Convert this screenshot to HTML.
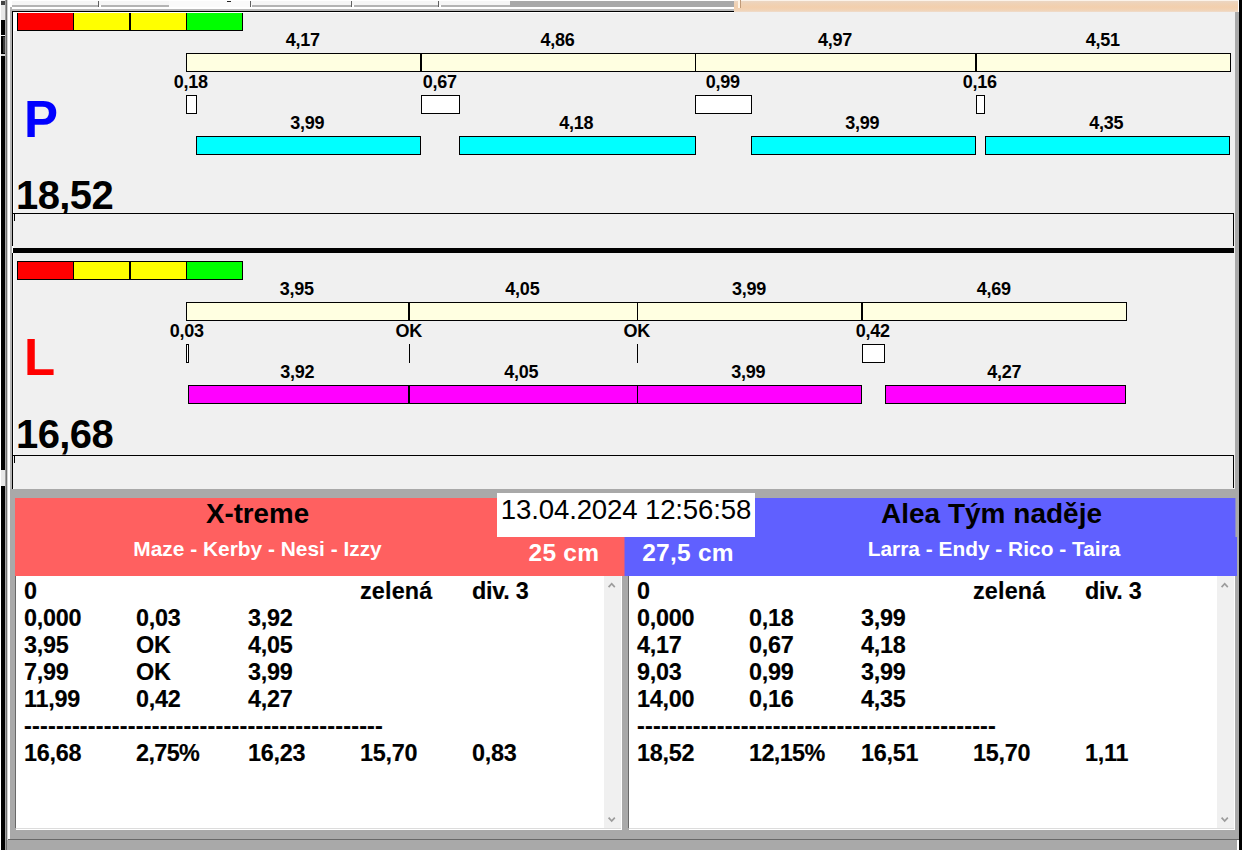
<!DOCTYPE html>
<html lang="cs"><head><meta charset="utf-8"><title>Flyball</title>
<style>
html,body{margin:0;padding:0;}
body{width:1242px;height:850px;overflow:hidden;background:#f0f0f0;position:relative;font-family:"Liberation Sans",sans-serif;color:#000;}
div,span{position:absolute;box-sizing:border-box;}
.b{border:1px solid #000;}
.lbl{font-weight:bold;font-size:18px;letter-spacing:-0.25px;line-height:20px;height:20px;width:80px;text-align:center;white-space:nowrap;}
.big{font-weight:bold;font-size:40px;line-height:40px;white-space:nowrap;letter-spacing:-0.6px;}
.letter{font-weight:bold;font-size:51px;line-height:51px;white-space:nowrap;}
.txt{font-weight:bold;font-size:23.4px;letter-spacing:-0.25px;-webkit-text-stroke:0.15px #000;line-height:27px;white-space:nowrap;height:27px;}
.hw{color:#fff;font-weight:bold;white-space:nowrap;}
.hb{color:#000;font-weight:bold;white-space:nowrap;text-align:center;}
</style></head><body>

<div style="left:13px;top:12px;width:1px;height:477px;background:#fff;"></div>
<div style="left:14px;top:12px;width:3px;height:19px;background:#fff;"></div>
<div class="b" style="left:17px;top:12px;width:57px;height:19px;background:#ff0000;"></div>
<div class="b" style="left:73px;top:12px;width:57px;height:19px;background:#ffff00;"></div>
<div class="b" style="left:130px;top:12px;width:57px;height:19px;background:#ffff00;"></div>
<div class="b" style="left:186px;top:12px;width:57px;height:19px;background:#00ff00;"></div>
<div style="left:129px;top:12px;width:2px;height:19px;background:#000;"></div>
<div class="b" style="left:186px;top:53px;width:1045px;height:19px;background:#ffffe1;"></div>
<div style="left:420px;top:53px;width:2px;height:19px;background:#000;"></div>
<div style="left:695px;top:53px;width:1px;height:19px;background:#000;"></div>
<div style="left:975px;top:53px;width:2px;height:19px;background:#000;"></div>
<div class="lbl" style="left:262.7px;top:30.0px;">4,17</div>
<div class="lbl" style="left:517.5px;top:30.0px;">4,86</div>
<div class="lbl" style="left:795.0px;top:30.0px;">4,97</div>
<div class="lbl" style="left:1062.7px;top:30.0px;">4,51</div>
<div class="b" style="left:186px;top:95px;width:11px;height:19px;background:#fff;"></div>
<div class="lbl" style="left:150.7px;top:72.0px;">0,18</div>
<div class="b" style="left:421px;top:95px;width:39px;height:19px;background:#fff;"></div>
<div class="lbl" style="left:399.7px;top:72.0px;">0,67</div>
<div class="b" style="left:695px;top:95px;width:57px;height:19px;background:#fff;"></div>
<div class="lbl" style="left:682.7px;top:72.0px;">0,99</div>
<div class="b" style="left:976px;top:95px;width:9px;height:19px;background:#fff;"></div>
<div class="lbl" style="left:939.7px;top:72.0px;">0,16</div>
<div class="b" style="left:196px;top:136px;width:225px;height:19px;background:#00ffff;"></div>
<div class="b" style="left:459px;top:136px;width:237px;height:19px;background:#00ffff;"></div>
<div class="b" style="left:751px;top:136px;width:225px;height:19px;background:#00ffff;"></div>
<div class="b" style="left:985px;top:136px;width:245px;height:19px;background:#00ffff;"></div>
<div class="lbl" style="left:267.2px;top:113.0px;">3,99</div>
<div class="lbl" style="left:536.2px;top:113.0px;">4,18</div>
<div class="lbl" style="left:822.2px;top:113.0px;">3,99</div>
<div class="lbl" style="left:1066.2px;top:113.0px;">4,35</div>
<div class="letter" style="left:24px;top:94px;color:#0000ff;">P</div>
<div class="big" style="left:16px;top:175px;">18,52</div>
<div style="left:12px;top:213px;width:1222px;height:33px;background:#f0f0f0;border-top:1px solid #000;border-right:1px solid #000;"></div>
<div style="left:14px;top:214px;width:1px;height:7px;background:#000;"></div>
<div style="left:13px;top:248px;width:1221px;height:5px;background:#000;"></div>
<div class="b" style="left:17px;top:261px;width:57px;height:19px;background:#ff0000;"></div>
<div class="b" style="left:73px;top:261px;width:57px;height:19px;background:#ffff00;"></div>
<div class="b" style="left:130px;top:261px;width:57px;height:19px;background:#ffff00;"></div>
<div class="b" style="left:186px;top:261px;width:57px;height:19px;background:#00ff00;"></div>
<div style="left:129px;top:261px;width:2px;height:19px;background:#000;"></div>
<div class="b" style="left:186px;top:302px;width:941px;height:19px;background:#ffffe1;"></div>
<div style="left:408px;top:302px;width:2px;height:19px;background:#000;"></div>
<div style="left:637px;top:302px;width:1px;height:19px;background:#000;"></div>
<div style="left:861px;top:302px;width:2px;height:19px;background:#000;"></div>
<div class="lbl" style="left:256.7px;top:279.0px;">3,95</div>
<div class="lbl" style="left:482.4px;top:279.0px;">4,05</div>
<div class="lbl" style="left:709.0px;top:279.0px;">3,99</div>
<div class="lbl" style="left:953.7px;top:279.0px;">4,69</div>
<div class="b" style="left:186px;top:344px;width:3px;height:19px;background:#fff;"></div>
<div class="lbl" style="left:146.7px;top:321.0px;">0,03</div>
<div style="left:409px;top:344px;width:1px;height:19px;background:#000;"></div>
<div class="lbl" style="left:368.7px;top:321.0px;">OK</div>
<div style="left:637px;top:344px;width:1px;height:19px;background:#000;"></div>
<div class="lbl" style="left:596.7px;top:321.0px;">OK</div>
<div class="b" style="left:862px;top:344px;width:23px;height:19px;background:#fff;"></div>
<div class="lbl" style="left:832.7px;top:321.0px;">0,42</div>
<div class="b" style="left:188px;top:385px;width:221px;height:19px;background:#ff00ff;"></div>
<div class="b" style="left:409px;top:385px;width:229px;height:19px;background:#ff00ff;"></div>
<div class="b" style="left:637px;top:385px;width:225px;height:19px;background:#ff00ff;"></div>
<div class="b" style="left:885px;top:385px;width:241px;height:19px;background:#ff00ff;"></div>
<div class="lbl" style="left:257.2px;top:362.0px;">3,92</div>
<div class="lbl" style="left:481.2px;top:362.0px;">4,05</div>
<div class="lbl" style="left:708.2px;top:362.0px;">3,99</div>
<div class="lbl" style="left:964.2px;top:362.0px;">4,27</div>
<div class="letter" style="left:24px;top:332px;color:#ff0000;">L</div>
<div class="big" style="left:16px;top:414px;">16,68</div>
<div style="left:12px;top:455px;width:1222px;height:33px;background:#f0f0f0;border-top:1px solid #000;border-right:1px solid #000;"></div>
<div style="left:14px;top:456px;width:1px;height:7px;background:#000;"></div>
<div style="left:10px;top:489px;width:1229px;height:361px;background:#a9a9a9;"></div>
<div style="left:15px;top:498px;width:610px;height:78px;background:#ff6060;"></div>
<div style="left:624px;top:498px;width:1px;height:78px;background:#b060b0;"></div>
<div style="left:625px;top:498px;width:611px;height:78px;background:#6060ff;"></div>
<div style="left:497px;top:493px;width:258px;height:44px;background:#fff;"></div>
<div style="left:497px;top:493px;width:258px;height:44px;line-height:33px;font-size:27.6px;letter-spacing:-0.15px;text-align:center;white-space:nowrap;">13.04.2024 12:56:58</div>
<div class="hb" style="left:16px;top:498px;width:483px;font-size:27.7px;line-height:32px;">X-treme</div>
<div class="hw" style="left:16px;top:536.5px;width:483px;text-align:center;font-size:20.9px;line-height:24px;">Maze - Kerby - Nesi - Izzy</div>
<div class="hb" style="left:755px;top:498px;width:473px;font-size:28px;line-height:32px;">Alea Tým naděje</div>
<div class="hw" style="left:755px;top:536.5px;width:478px;text-align:center;font-size:20.9px;line-height:24px;">Larra - Endy - Rico - Taira</div>
<div class="hw" style="left:528.5px;top:538.5px;font-size:24.5px;letter-spacing:0.25px;line-height:28px;">25 cm</div>
<div class="hw" style="left:642.2px;top:538.5px;font-size:24.5px;letter-spacing:0.25px;line-height:28px;">27,5 cm</div>
<div style="left:16px;top:576px;width:605px;height:254px;background:#fff;"></div>
<div style="left:16px;top:828px;width:605px;height:1px;background:#dcdcdc;"></div>
<div style="left:604px;top:576px;width:17px;height:252px;background:#f0f0f0;"></div>
<svg style="position:absolute;left:604px;top:578px" width="17" height="14" viewBox="0 0 17 14"><path d="M4.6 9.1 L7.7 5.7 L10.8 9.1" fill="none" stroke="#9c9c9c" stroke-width="1.7"/></svg>
<svg style="position:absolute;left:604px;top:812px" width="17" height="14" viewBox="0 0 17 14"><path d="M4.6 5.6 L7.7 9 L10.8 5.6" fill="none" stroke="#9c9c9c" stroke-width="1.7"/></svg>
<div class="txt" style="left:24px;top:578px;">0</div>
<div class="txt" style="left:360px;top:578px;letter-spacing:0.15px;">zelená</div>
<div class="txt" style="left:472px;top:578px;">div. 3</div>
<div class="txt" style="left:24px;top:605px;">0,000</div>
<div class="txt" style="left:136px;top:605px;">0,03</div>
<div class="txt" style="left:248px;top:605px;">3,92</div>
<div class="txt" style="left:24px;top:632px;">3,95</div>
<div class="txt" style="left:136px;top:632px;">OK</div>
<div class="txt" style="left:248px;top:632px;">4,05</div>
<div class="txt" style="left:24px;top:659px;">7,99</div>
<div class="txt" style="left:136px;top:659px;">OK</div>
<div class="txt" style="left:248px;top:659px;">3,99</div>
<div class="txt" style="left:24px;top:686px;">11,99</div>
<div class="txt" style="left:136px;top:686px;">0,42</div>
<div class="txt" style="left:248px;top:686px;">4,27</div>
<div class="txt" style="left:24px;top:713px;letter-spacing:0.19px;">---------------------------------------------</div>
<div class="txt" style="left:24px;top:740px;">16,68</div>
<div class="txt" style="left:136px;top:740px;letter-spacing:-0.6px;">2,75%</div>
<div class="txt" style="left:248px;top:740px;">16,23</div>
<div class="txt" style="left:360px;top:740px;">15,70</div>
<div class="txt" style="left:472px;top:740px;">0,83</div>
<div style="left:629px;top:576px;width:605px;height:254px;background:#fff;"></div>
<div style="left:629px;top:828px;width:605px;height:1px;background:#dcdcdc;"></div>
<div style="left:1217px;top:576px;width:17px;height:252px;background:#f0f0f0;"></div>
<svg style="position:absolute;left:1217px;top:578px" width="17" height="14" viewBox="0 0 17 14"><path d="M4.6 9.1 L7.7 5.7 L10.8 9.1" fill="none" stroke="#9c9c9c" stroke-width="1.7"/></svg>
<svg style="position:absolute;left:1217px;top:812px" width="17" height="14" viewBox="0 0 17 14"><path d="M4.6 5.6 L7.7 9 L10.8 5.6" fill="none" stroke="#9c9c9c" stroke-width="1.7"/></svg>
<div class="txt" style="left:637px;top:578px;">0</div>
<div class="txt" style="left:973px;top:578px;letter-spacing:0.15px;">zelená</div>
<div class="txt" style="left:1085px;top:578px;">div. 3</div>
<div class="txt" style="left:637px;top:605px;">0,000</div>
<div class="txt" style="left:749px;top:605px;">0,18</div>
<div class="txt" style="left:861px;top:605px;">3,99</div>
<div class="txt" style="left:637px;top:632px;">4,17</div>
<div class="txt" style="left:749px;top:632px;">0,67</div>
<div class="txt" style="left:861px;top:632px;">4,18</div>
<div class="txt" style="left:637px;top:659px;">9,03</div>
<div class="txt" style="left:749px;top:659px;">0,99</div>
<div class="txt" style="left:861px;top:659px;">3,99</div>
<div class="txt" style="left:637px;top:686px;">14,00</div>
<div class="txt" style="left:749px;top:686px;">0,16</div>
<div class="txt" style="left:861px;top:686px;">4,35</div>
<div class="txt" style="left:637px;top:713px;letter-spacing:0.19px;">---------------------------------------------</div>
<div class="txt" style="left:637px;top:740px;">18,52</div>
<div class="txt" style="left:749px;top:740px;letter-spacing:-0.6px;">12,15%</div>
<div class="txt" style="left:861px;top:740px;">16,51</div>
<div class="txt" style="left:973px;top:740px;">15,70</div>
<div class="txt" style="left:1085px;top:740px;">1,11</div>
<div style="left:1234px;top:576px;width:1px;height:254px;background:#fff;"></div>
<div style="left:621px;top:576px;width:1px;height:254px;background:#fff;"></div>
<div style="left:15px;top:576px;width:1px;height:252px;background:#696969;"></div>
<div style="left:628px;top:576px;width:1px;height:252px;background:#696969;"></div>
<div style="left:10px;top:839px;width:1229px;height:1px;background:#696969;"></div>
<div style="left:10px;top:0px;width:1229px;height:11px;background:#fff;"></div>
<div style="left:12px;top:1px;width:498px;height:4px;background:#f6f6f6;"></div>
<div style="left:12px;top:5px;width:86px;height:2px;background:#b4b4b4;"></div>
<div style="left:101px;top:5px;width:68px;height:2px;background:#b4b4b4;"></div>
<div style="left:252px;top:5px;width:99px;height:2px;background:#b4b4b4;"></div>
<div style="left:354px;top:5px;width:84px;height:2px;background:#b4b4b4;"></div>
<div style="left:441px;top:5px;width:69px;height:2px;background:#b4b4b4;"></div>
<div style="left:98px;top:1px;width:1px;height:6px;background:#606060;"></div>
<div style="left:250px;top:1px;width:1px;height:6px;background:#606060;"></div>
<div style="left:351px;top:1px;width:1px;height:6px;background:#606060;"></div>
<div style="left:438px;top:1px;width:1px;height:6px;background:#606060;"></div>
<div style="left:169px;top:1px;width:81px;height:6px;background:#fafafa;"></div>
<div style="left:227px;top:1px;width:4px;height:1px;background:#222;"></div>
<div style="left:510px;top:1px;width:224px;height:6px;background:#a9a9a9;"></div>
<div style="left:12px;top:9px;width:722px;height:2px;background:#b8b8b8;"></div>
<div style="left:12px;top:11px;width:722px;height:1px;background:#000;"></div>
<div style="left:13px;top:12px;width:721px;height:1px;background:#fff;"></div>
<div style="left:734px;top:0px;width:504px;height:12px;background:linear-gradient(#ead8c8 0%,#efd2b6 30%,#f2cfad 60%,#f1d3b6 85%,#efdccc 100%);"></div>
<div style="left:734px;top:0px;width:504px;height:1px;background:#fbf3ea;"></div>
<div style="left:738px;top:0px;width:2px;height:8px;background:#fff4e6;"></div>
<div style="left:740px;top:0px;width:1px;height:8px;background:#c09a78;"></div>
<div style="left:0px;top:0px;width:1px;height:850px;background:#fff;"></div>
<div style="left:1px;top:0px;width:4px;height:850px;background:#e8e8e8;"></div>
<div style="left:1px;top:1px;width:4px;height:4px;background:#444;"></div>
<div style="left:1px;top:20px;width:4px;height:450px;background:#000;"></div>
<div style="left:1px;top:486px;width:4px;height:364px;background:#000;"></div>
<div style="left:1px;top:35px;width:4px;height:1px;background:#f0f0f0;"></div>
<div style="left:1px;top:54px;width:4px;height:2px;background:#d8d8d8;"></div>
<div style="left:3px;top:37px;width:2px;height:16px;background:#3a3a3a;"></div>
<div style="left:5px;top:0px;width:1px;height:850px;background:#a0a0a0;"></div>
<div style="left:6px;top:0px;width:1px;height:850px;background:#707070;"></div>
<div style="left:7px;top:0px;width:1px;height:850px;background:#d0d0d0;"></div>
<div style="left:8px;top:0px;width:2px;height:839px;background:#fff;"></div>
<div style="left:8px;top:839px;width:2px;height:1px;background:#696969;"></div>
<div style="left:10px;top:7px;width:2px;height:482px;background:#b4b4b4;"></div>
<div style="left:12px;top:11px;width:1px;height:235px;background:#000;"></div>
<div style="left:12px;top:253px;width:1px;height:236px;background:#000;"></div>
<div style="left:12px;top:246px;width:1px;height:7px;background:#fff;"></div>
<div style="left:7px;top:840px;width:3px;height:10px;background:#a9a9a9;"></div>
<div style="left:1235px;top:12px;width:4px;height:838px;background:#a9a9a9;"></div>
<div style="left:1239px;top:0px;width:3px;height:850px;background:#000;"></div>
<div style="left:1238px;top:0px;width:1px;height:12px;background:#fff;"></div>
<div style="left:1235px;top:839px;width:4px;height:1px;background:#696969;"></div>
<div style="left:1237px;top:840px;width:2px;height:10px;background:#fff;"></div>
<div style="left:1235px;top:537px;width:2px;height:39px;background:#6060ff;"></div>
<div style="left:1235px;top:498px;width:1px;height:39px;background:#8a8ad0;"></div>
</body></html>
